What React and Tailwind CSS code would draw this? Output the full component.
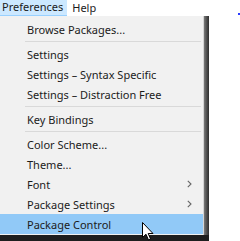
import React from 'react';

const font = { fontFamily: '"Noto Sans", "Open Sans", Arial, sans-serif' };

const Item = ({ label, sub, active }) => (
  <div
    className={`relative flex h-[20px] items-center pl-[27px] pr-[10px] text-[11px] text-[#1b1b1b] ${
      active ? 'bg-[#91c9f7]' : ''
    }`}
  >
    <span className="flex-1 leading-none">{label}</span>
    {sub && (
      <svg width="5" height="8" viewBox="0 0 5 8" className="mr-[1px]">
        <polyline points="0.8,0.8 4,4 0.8,7.2" fill="none" stroke="#666" strokeWidth="1.1" />
      </svg>
    )}
  </div>
);

const Sep = () => (
  <div className="flex h-[5px] items-center pl-[25px] pr-[2px]">
    <div className="h-px w-full bg-[#d9d9d9]" />
  </div>
);

export default function App() {
  return (
    <div className="relative flex h-[241px] w-[240px] flex-col overflow-hidden bg-white" style={font}>
      <div className="flex h-[16px] items-center text-[11px] text-[#1b1b1b]">
        <div className="flex h-full items-center border-b border-[#99d1ff] bg-[#cce8ff] pl-[2px] pr-[4px]">
          Preferences
        </div>
        <div className="pl-[5px]">Help</div>
      </div>

      <div className="flex">
        <div className="flex w-[209px] flex-col">
          <div className="flex">
            <div className="w-[204px] border-r border-[#d4d4d4] bg-[#f1f1f1] pt-[3px] pb-[1px]">
              <Item label="Browse Packages..." />
              <Sep />
              <Item label="Settings" />
              <Item label="Settings – Syntax Specific" />
              <Item label="Settings – Distraction Free" />
              <Sep />
              <Item label="Key Bindings" />
              <Sep />
              <Item label="Color Scheme..." />
              <Item label="Theme..." />
              <Item label="Font" sub />
              <Item label="Package Settings" sub />
              <Item label="Package Control" active />
            </div>
            <div className="w-[5px] bg-gradient-to-r from-[#7a7a7a] to-[#2e2e2e]" />
          </div>
          <div className="h-[6px] bg-[#1e1e1e]" />
        </div>
        <div className="flex-1" />
      </div>

      <div className="absolute left-[238px] top-[13px] h-[2px] w-[2px] bg-[#2b3bff]" />

      <svg className="absolute left-[142px] top-[222px]" width="12" height="19" viewBox="0 0 12 19">
        <path d="M0.5 0.5 L0.5 15.5 L4 12.2 L6.5 18 L8.6 17.1 L6.2 11.5 L11 11.5 Z" fill="#fff" stroke="#000" strokeWidth="1" strokeLinejoin="round" />
      </svg>
    </div>
  );
}
